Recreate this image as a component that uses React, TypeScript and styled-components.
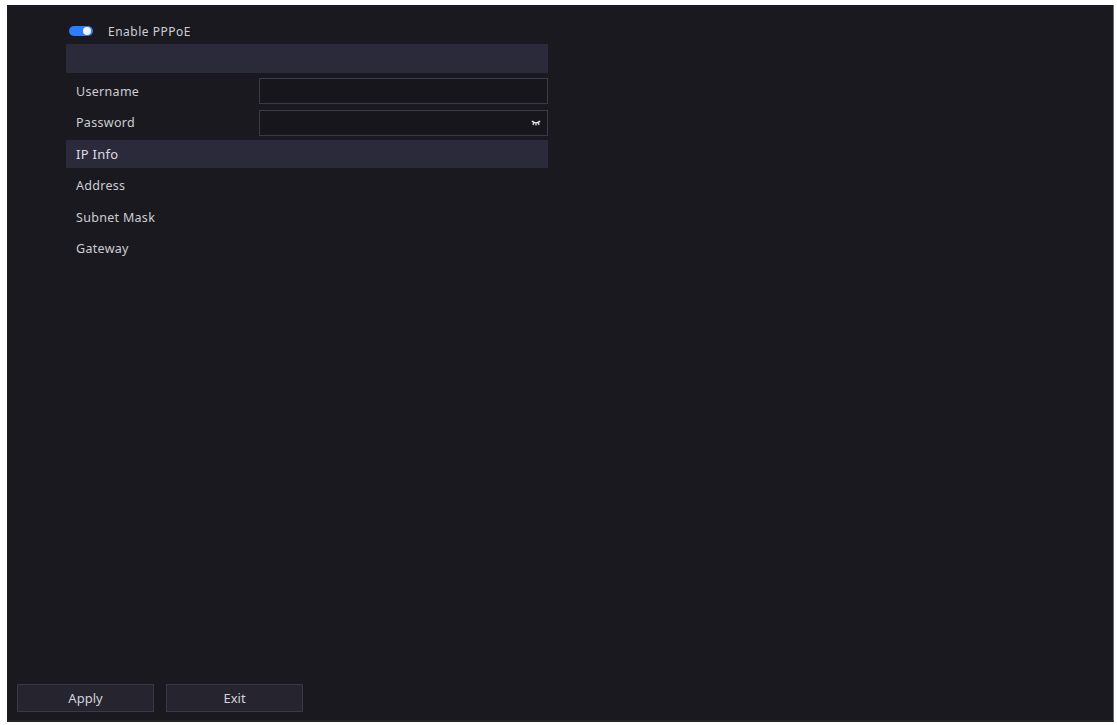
import React, { useState } from 'react'
import styled, { createGlobalStyle } from 'styled-components'

const GlobalStyle = createGlobalStyle`
  html, body {
    margin: 0;
    padding: 0;
    background: #ffffff;
    font-family: 'Noto Sans', 'Open Sans', sans-serif;
  }
`

const Frame = styled.div`
  box-sizing: border-box;
  width: 1117px;
  height: 725px;
  padding: 5px 3px 3px 7px;
  background: #ffffff;
`

const Panel = styled.main`
  box-sizing: border-box;
  height: 100%;
  display: flex;
  flex-direction: column;
  justify-content: space-between;
  background: #1a1920;
  border-right: 1px solid #6f6e76;
  border-bottom: 2px solid #24232a;
`

const Form = styled.section`
  width: 482px;
  margin-left: 59px;
  padding-top: 15px;
  display: flex;
  flex-direction: column;
`

const ToggleRow = styled.div`
  height: 22px;
  display: flex;
  align-items: center;
  gap: 15px;
  padding-left: 3px;
  margin-bottom: 2px;
  color: #cfcfd6;
  font-size: 12px;
  letter-spacing: 0.5px;
`

const Switch = styled.button<{ $on: boolean }>`
  position: relative;
  width: 24px;
  height: 10px;
  padding: 0;
  border: none;
  border-radius: 5px;
  background: ${p => (p.$on ? '#2f7dff' : '#4a4956')};
  cursor: pointer;

  &::after {
    content: '';
    position: absolute;
    top: 1px;
    left: ${p => (p.$on ? '14px' : '1px')};
    width: 8px;
    height: 8px;
    border-radius: 50%;
    background: #f2f4ff;
  }
`

const HeaderBar = styled.div`
  height: 29px;
  background: #2a2a3b;
  margin-bottom: 4px;
`

const Rows = styled.div`
  display: flex;
  flex-direction: column;
  gap: 3.6px;
`

const Row = styled.div<{ $section?: boolean }>`
  height: 28px;
  display: grid;
  grid-template-columns: 193px 1fr;
  align-items: center;
  background: ${p => (p.$section ? '#2b2a3a' : 'transparent')};
`

const Label = styled.span<{ $section?: boolean }>`
  padding-left: 10px;
  color: ${p => (p.$section ? '#dcdce2' : '#cdcdd4')};
  font-size: ${p => (p.$section ? '13px' : '12.5px')};
  letter-spacing: 0.3px;
`

const InputWrap = styled.div`
  position: relative;
  height: 26px;
`

const Input = styled.input`
  box-sizing: border-box;
  width: 100%;
  height: 100%;
  background: #17161d;
  border: 1px solid #3b3a48;
  color: #d8d8de;
  font-family: inherit;
  font-size: 12px;
  padding: 0 24px 0 8px;
  outline: none;
`

const EyeIcon = styled.svg`
  position: absolute;
  right: 7px;
  top: 10px;
`

const Footer = styled.footer`
  display: flex;
  gap: 12px;
  padding: 0 0 8px 10px;
`

const Button = styled.button`
  width: 137px;
  height: 28px;
  background: #25242f;
  border: 1px solid #3a3946;
  color: #d4d4da;
  font-family: 'Noto Sans', 'Open Sans', sans-serif;
  font-size: 13px;
  cursor: pointer;
`

const fields = [
  { label: 'Username', input: true },
  { label: 'Password', input: true, secret: true },
  { label: 'IP Info', section: true },
  { label: 'Address' },
  { label: 'Subnet Mask' },
  { label: 'Gateway' },
]

const App = () => {
  const [enabled, setEnabled] = useState(true)

  return (
    <Frame>
      <GlobalStyle />
      <Panel>
        <Form>
          <ToggleRow>
            <Switch $on={enabled} onClick={() => setEnabled(!enabled)} />
            <span>Enable PPPoE</span>
          </ToggleRow>
          <HeaderBar />
          <Rows>
            {fields.map(f => (
              <Row key={f.label} $section={f.section}>
                <Label $section={f.section}>{f.label}</Label>
                {f.input && (
                  <InputWrap>
                    <Input type={f.secret ? 'password' : 'text'} />
                    {f.secret && (
                      <EyeIcon width="10" height="6" viewBox="0 0 10 6">
                        <path
                          d="M1 1 Q5 5 9 1"
                          fill="none"
                          stroke="#e8e8ee"
                          strokeWidth="1.6"
                        />
                        <path
                          d="M2.5 3 L2 5 M5 3.8 L5 5.6 M7.5 3 L8 5"
                          stroke="#e8e8ee"
                          strokeWidth="1.2"
                        />
                      </EyeIcon>
                    )}
                  </InputWrap>
                )}
              </Row>
            ))}
          </Rows>
        </Form>
        <Footer>
          <Button>Apply</Button>
          <Button>Exit</Button>
        </Footer>
      </Panel>
    </Frame>
  )
}

export default App
